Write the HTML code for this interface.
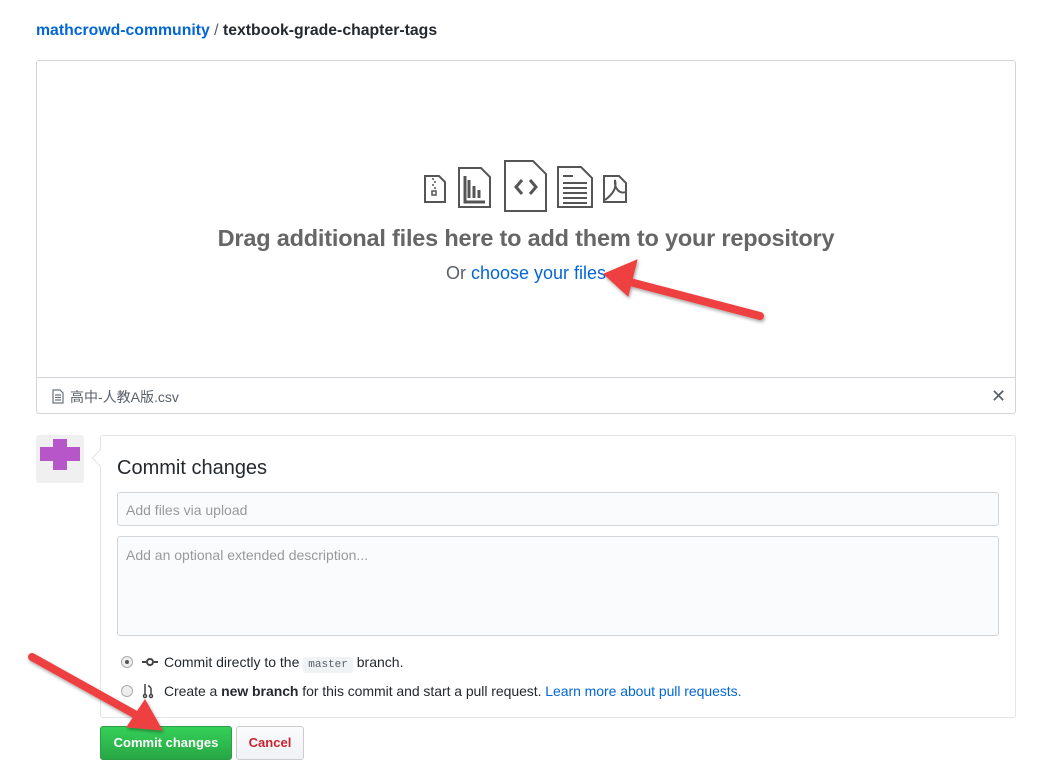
<!DOCTYPE html>
<html><head><meta charset="utf-8"><style>
*{box-sizing:border-box;margin:0;padding:0}
body{width:1043px;height:775px;background:#fff;font-family:"Liberation Sans","Noto Sans CJK SC",sans-serif;color:#24292e;position:relative;overflow:hidden}
.abs{position:absolute}
a{color:#0366d6;text-decoration:none}
</style></head><body>
<div class="abs" style="left:36px;top:22px;font-size:15.8px"><a style="font-weight:bold;color:#0366d6">mathcrowd-community</a> <span style="color:#586069">/</span> <span style="font-weight:bold">textbook-grade-chapter-tags</span></div>

<div class="abs" style="left:36px;top:60px;width:980px;height:318px;border:1px solid #d1d5da;border-radius:3px 3px 0 0"></div>
<svg class="abs" style="left:420px;top:158px" width="212" height="56" viewBox="0 0 212 56" fill="none" stroke="#555" stroke-width="2">
<path d="M5 18h14l6 6v20H5z"/><path d="M13 20v2m2 1v2m-2 1v2m2 1v2m-3 2h4v4h-4z" stroke-width="1.5"/>
<path d="M39 10h22l9 9v30H39z"/><path d="M45 18v26h20M49 22v18M54 28v12M59 32v8" stroke-width="3"/>
<path d="M85 3h28l13 13v37H85z"/><path d="M102 22l-6 7 6 7M110 22l6 7-6 7" stroke-width="3"/>
<path d="M138 9h23l11 11v29h-34z"/><path d="M143 18h10M143 25h24M143 30h24M143 35h24M143 40h24M143 45h24" stroke-width="2"/>
<path d="M184 18h15l7 7v19h-22z"/><path d="M185 42c8-6 12-12 10-20c-1 10 6 14 10 12" stroke-width="2"/>
</svg>
<div class="abs" style="left:36px;top:225px;width:980px;text-align:center;font-size:23.5px;font-weight:bold;color:#666;letter-spacing:-0.2px">Drag additional files here to add them to your repository</div>
<div class="abs" style="left:36px;top:263px;width:980px;text-align:center;font-size:18px;color:#586069">Or <a>choose your files</a></div>

<div class="abs" style="left:36px;top:377px;width:980px;height:37px;border:1px solid #d1d5da;border-radius:0 0 3px 3px"></div>
<svg class="abs" style="left:52px;top:389px" width="12" height="15" viewBox="0 0 12 15" fill="none" stroke="#6a737d" stroke-width="1.2"><path d="M1 1h7l3 3v10H1zM3 6h6M3 8.5h6M3 11h6"/></svg>
<div class="abs" style="left:70px;top:387px;font-size:14px;color:#586069">高中-人教A版.csv</div>
<div class="abs" style="left:991px;top:386px;font-size:18px;color:#586069">✕</div>

<div class="abs" style="left:36px;top:435px;width:48px;height:48px;background:#f0f0f0;border-radius:3px"></div>
<div class="abs" style="left:40px;top:447px;width:40px;height:14px;background:#b656c8"></div>
<div class="abs" style="left:53px;top:439px;width:14px;height:31px;background:#b656c8"></div>

<div class="abs" style="left:100px;top:435px;width:916px;height:283px;border:1px solid #e1e4e8;border-radius:3px"></div>
<div class="abs" style="left:94px;top:452px;width:12px;height:12px;background:#fff;border-left:1px solid #e1e4e8;border-bottom:1px solid #e1e4e8;transform:rotate(45deg)"></div>
<div class="abs" style="left:117px;top:457px;font-size:20px">Commit changes</div>
<div class="abs" style="left:117px;top:492px;width:882px;height:34px;border:1px solid #d1d5da;border-radius:3px;background:#fafbfc;font-size:14px;color:#999;padding:9px 8px">Add files via upload</div>
<div class="abs" style="left:117px;top:536px;width:882px;height:100px;border:1px solid #d1d5da;border-radius:3px;background:#fafbfc;font-size:14px;color:#999;padding:10px 8px">Add an optional extended description...</div>

<div class="abs" style="left:121px;top:656px;width:12px;height:12px;border-radius:50%;border:1px solid #aaa;background:#eee"><div style="width:4px;height:4px;margin:3px;border-radius:50%;background:#555"></div></div>
<svg class="abs" style="left:142px;top:657px" width="16" height="10"><path d="M0 5h4M12 5h4" stroke="#444" stroke-width="2"/><circle cx="8" cy="5" r="3" fill="none" stroke="#444" stroke-width="2"/></svg>
<div class="abs" style="left:164px;top:654px;font-size:14px">Commit directly to the <span style="font-family:'Liberation Mono',monospace;font-size:11px;background:#eff3f6;color:#586069;padding:2px 5px;border-radius:3px">master</span> branch.</div>
<div class="abs" style="left:121px;top:685px;width:12px;height:12px;border-radius:50%;border:1px solid #aaa;background:#eee"></div>
<svg class="abs" style="left:142px;top:683px" width="12" height="16" fill="none" stroke="#444" stroke-width="1.5"><path d="M3 1v10M9 5v6M9 5L7 3h-1"/><circle cx="3" cy="13" r="1.5"/><circle cx="9" cy="13" r="1.5"/></svg>
<div class="abs" style="left:164px;top:683px;font-size:14px;letter-spacing:-0.05px">Create a <b>new branch</b> for this commit and start a pull request. <a>Learn more about pull requests.</a></div>

<div class="abs" style="left:100px;top:726px;width:132px;height:34px;border-radius:3px;background:linear-gradient(#34d058,#28a745);border:1px solid #2a9d45;color:#fff;font-weight:bold;font-size:13px;text-align:center;line-height:32px">Commit changes</div>
<div class="abs" style="left:236px;top:726px;width:68px;height:34px;border-radius:3px;background:linear-gradient(#fafbfc,#eff3f6);border:1px solid #ccc;color:#cb2431;font-weight:bold;font-size:13px;text-align:center;line-height:32px">Cancel</div>

<svg class="abs" style="left:0;top:0" width="1043" height="775">
<defs><filter id="s"><feDropShadow dx="1" dy="2" stdDeviation="1.5" flood-opacity=".35"/></filter></defs>
<g fill="#ee4040" stroke="#ee4040" filter="url(#s)">
<path d="M760 316L630 282" stroke-width="8" stroke-linecap="round"/>
<path d="M604 274L637 260L628 296Z"/>
<path d="M32 657L138 716" stroke-width="8" stroke-linecap="round"/>
<path d="M162 730L127 727L145 700Z"/>
</g></svg>
</body></html>
